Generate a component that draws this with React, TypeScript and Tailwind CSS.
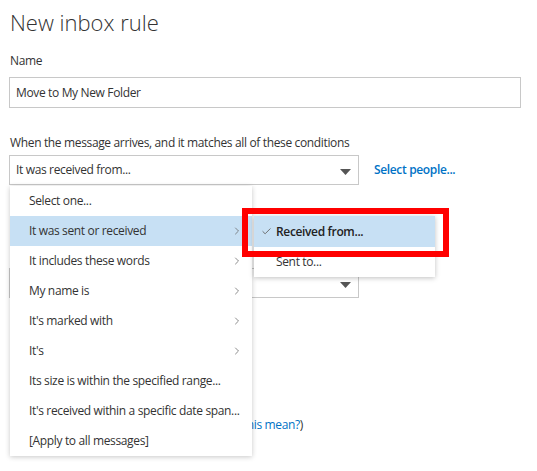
import { Check, ChevronRight } from "lucide-react";

const menuItems = [
  { label: "Select one...", sub: false },
  { label: "It was sent or received", sub: true, active: true },
  { label: "It includes these words", sub: true },
  { label: "My name is", sub: true },
  { label: "It's marked with", sub: true },
  { label: "It's", sub: true },
  { label: "Its size is within the specified range...", sub: false },
  { label: "It's received within a specific date span...", sub: false },
  { label: "[Apply to all messages]", sub: false },
];

function Caret() {
  return (
    <svg width="11" height="6" viewBox="0 0 11 6" className="absolute right-[7px] top-1/2 -translate-y-1/2 mt-[2px]">
      <path d="M0 0 L11 0 L5.5 6 Z" fill="#555" />
    </svg>
  );
}

function SubMenu() {
  return (
    <div className="absolute left-[244px] top-0 w-[181px] bg-white shadow-[0_1px_5px_rgba(0,0,0,0.25)] z-20">
      <div className="h-[31px] bg-[#c7e0f4] flex items-center text-[#222] font-semibold">
        <Check size={11} strokeWidth={2} className="ml-[7px] mr-[4px] text-[#666]" />
        <span>Received from...</span>
      </div>
      <div className="h-[30px] flex items-center pl-[22px] text-[#333]">Sent to...</div>
      {/* red highlight frame */}
      <div className="absolute -left-[12px] -top-[8px] w-[207px] h-[49px] border-[6px] border-[#f00]" />
    </div>
  );
}

function ConditionMenu() {
  return (
    <div className="absolute left-0 top-[30px] w-[242px] bg-white shadow-[0_1px_5px_rgba(0,0,0,0.22)] z-10">
      {menuItems.map((item) => (
        <div
          key={item.label}
          className={`relative h-[30px] flex items-center justify-between pl-[19px] pr-[9px] text-[#333] ${
            item.active ? "bg-[#c7e0f4]" : ""
          }`}
        >
          <span className="whitespace-nowrap">{item.label}</span>
          {item.sub && <ChevronRight size={12} strokeWidth={1.5} className="text-[#666]" />}
          {item.active && <SubMenu />}
        </div>
      ))}
    </div>
  );
}

export default function App() {
  return (
    <div className="w-[537px] h-[471px] bg-white overflow-hidden pl-[9px] pt-[3px] text-[12px] tracking-[-0.35px] text-[#333] font-['Open_Sans',sans-serif]">
      <h1 className="text-[22px] font-light tracking-normal text-[#333] leading-[38px] pl-[1px]">New inbox rule</h1>

      <div className="mt-[12px] pl-[1px] leading-[16px]">Name</div>
      <div className="mt-[8px] w-[512px] h-[31px] border border-[#c8c8c8] flex items-center pl-[6px]">
        Move to My New Folder
      </div>

      <div className="mt-[27px] pl-[1px] leading-[16px]">When the message arrives, and it matches all of these conditions</div>
      <div className="mt-[4px] flex items-center">
        <div className="relative w-[350px] h-[30px] border border-[#c8c8c8] flex items-center pl-[6px]">
          It was received from...
          <Caret />
          <ConditionMenu />
        </div>
        <span className="ml-[15px] text-[#0072c6] font-semibold">Select people...</span>
      </div>

      <div className="mt-[44px] pl-[1px] leading-[16px]">Do all of the following</div>
      <div className="mt-[23px] relative w-[350px] h-[30px] border border-[#c8c8c8] flex items-center pl-[6px]">
        Select one...
        <Caret />
      </div>

      <div className="mt-[119px] pl-[6px] leading-[16px] flex items-center gap-[6px] whitespace-nowrap">
        <span className="w-[13px] h-[13px] border border-[#999] bg-white" />
        <span>
          Stop processing more rules (<span className="text-[#0072c6]">What does this mean?</span>)
        </span>
      </div>
    </div>
  );
}
